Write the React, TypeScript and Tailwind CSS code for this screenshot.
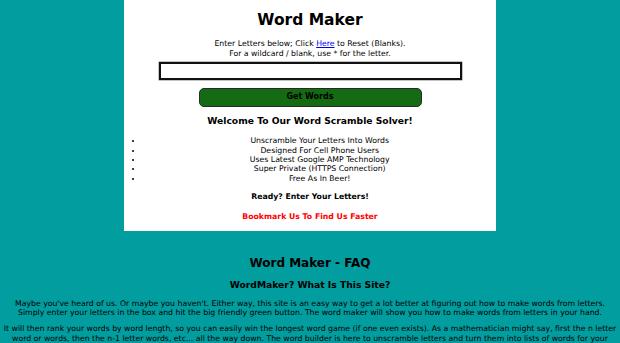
import React from "react";

export default function App() {
  return (
    <div
      className="min-h-screen bg-[#019d9f] text-black overflow-hidden"
      style={{ fontFamily: '"DejaVu Sans", Verdana, sans-serif' }}
    >
      <div className="mx-auto w-[372px] bg-white text-center pt-[11px] pb-[10px]">
        <h1 className="text-[15.5px] font-bold leading-[18px]">Word Maker</h1>
        <div className="mt-[10.3px] text-[7.75px] leading-[9.3px]">
          <div>
            Enter Letters below; Click{" "}
            <a href="#" className="text-[#0000ee] underline">
              Here
            </a>{" "}
            to Reset (Blanks).
          </div>
          <div>For a wildcard / blank, use * for the letter.</div>
        </div>
        <div className="mt-[4px] flex justify-center">
          <div className="w-[303px] h-[18px] border-2 border-[#111] bg-white shadow-[0_0_0_0.5px_#888]" />
        </div>
        <div className="mt-[8px] flex justify-center">
          <button className="w-[223px] h-[19px] rounded-[5px] bg-[#146b14] border border-[#2a2a2a] text-[8px] font-bold text-black leading-none">
            Get Words
          </button>
        </div>
        <h3 className="mt-[8.5px] text-[9.2px] font-bold leading-[11px]">
          Welcome To Our Word Scramble Solver!
        </h3>
        <ul className="mt-[10px] list-disc list-outside pl-[19.4px] text-[7.75px] leading-[9.3px]">
          <li>Unscramble Your Letters Into Words</li>
          <li>Designed For Cell Phone Users</li>
          <li>Uses Latest Google AMP Technology</li>
          <li>Super Private (HTTPS Connection)</li>
          <li>Free As In Beer!</li>
        </ul>
        <p className="mt-[9.5px] text-[7.75px] font-bold leading-[9.3px]">Ready? Enter Your Letters!</p>
        <p className="mt-[10.2px] text-[7.75px] font-bold leading-[9.3px] text-[#ff0000]">
          Bookmark Us To Find Us Faster
        </p>
      </div>
      <div className="text-center">
        <h2 className="mt-[25px] text-[12px] font-bold leading-[14px]">Word Maker - FAQ</h2>
        <h3 className="mt-[8.5px] text-[9.2px] font-bold leading-[11px]">WordMaker? What Is This Site?</h3>
        <p className="mt-[8.85px] text-[7.75px] leading-[9.3px]">
          Maybe you've heard of us. Or maybe you haven't. Either way, this site is an easy way to get a lot better at
          figuring out how to make words from letters.
          <br />
          Simply enter your letters in the box and hit the big friendly green button. The word maker will show you how
          to make words from letters in your hand.
        </p>
        <p className="mt-[7.35px] text-[7.75px] leading-[9.3px]">
          It will then rank your words by word length, so you can easily win the longest word game (if one even
          exists). As a mathematician might say, first the n letter word or words, then the n-1 letter words, etc...
          all the way down. The word builder is here to unscramble letters and turn them into lists of words for your
          enjoyment.
        </p>
      </div>
    </div>
  );
}
